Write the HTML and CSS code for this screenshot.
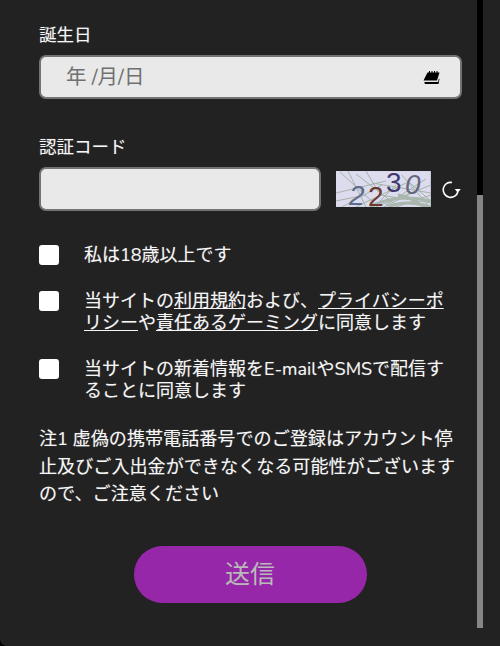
FILE: index.html
```html
<!DOCTYPE html>
<html lang="ja">
<head>
<meta charset="utf-8">
<title>登録</title>
<link rel="stylesheet" href="styles.css">
</head>
<body>
<form class="panel">
  <div class="field dob">
    <label class="label">誕生日</label>
    <div class="box date">
      <span class="date-text">年 /月/日</span>
      <svg class="cal" width="17" height="14" viewBox="0 0 17 14"><path d="M4.500 1.500H6V0h1v1.500h1.500V0h1v1.500H11V0h1v1.500h1.500V0h1v1.500H16.500L14 9.500H.5z" fill="#000"/><path d="M1.500 11h13.500l1-3.500.5.5-1 5H3a1.500 1.500 0 0 1-1.500-2z" fill="#000"/></svg>
    </div>
  </div>
  <div class="field code">
    <label class="label">認証コード</label>
    <div class="code-row">
      <div class="box code-input"></div>
      <svg class="captcha" width="95" height="36" viewBox="0 0 95 36">
        <rect width="95" height="36" fill="#dcdcee"/>
        <g stroke="#a5b3aa" stroke-width="1" fill="none">
          <path d="M4 1 L40 34M12 0 L30 36M20 3 L60 34M30 0 L42 20M0 22 L50 10M6 36 L46 14M20 36 L70 12M40 36 L95 14M50 34 L90 8M60 36 L95 24M66 4 L92 34M74 12 L95 30M36 12 L95 22M44 24 L95 32M0 30 L30 24M38 36 L60 14M48 36 L80 20"/>
          <path d="M34 36 Q60 22 95 30M52 36 Q70 28 95 36M62 24 Q76 26 88 36" stroke="#a9b7ae" stroke-width="3"/>
        </g>
        <text class="cap c1" x="13" y="34.500">2</text>
        <text class="cap c2" x="32" y="35.500">2</text>
        <text class="cap c3" x="50" y="21">3</text>
        <text class="cap c4" x="69" y="23">0</text>
      </svg>
      <svg class="refresh" width="20" height="20" viewBox="0 0 20 20"><path d="M17 11.500A7.500 7.500 0 1 1 11 2.500" fill="none" stroke="#fff" stroke-width="1.600"/><path d="M13.800 9h6l-3 3.800z" fill="#fff"/></svg>
    </div>
  </div>
  <ul class="checks">
    <li class="check one"><input type="checkbox" class="tick"><span>私は18歳以上です</span></li>
    <li class="check two"><input type="checkbox" class="tick"><span>当サイトの<a href="#">利用規約</a>および、<a href="#">プライバシーポリシー</a>や<a href="#">責任あるゲーミング</a>に同意します</span></li>
    <li class="check three"><input type="checkbox" class="tick"><span>当サイトの新着情報をE-mailやSMSで配信することに同意します</span></li>
  </ul>
  <p class="note">注1 虚偽の携帯電話番号でのご登録はアカウント停止及びご入出金ができなくなる可能性がございますので、ご注意ください</p>
  <div class="actions"><button type="button" class="send">送信</button></div>
</form>
<div class="scrollbar"><div class="thumb"></div></div>
</body>
</html>
```
FILE: styles.css
```css
* { box-sizing: border-box; }
html, body { margin: 0; height: 646px; overflow: hidden; background: #000; }
body {
  position: relative;
  font-family: "Nunito", "Lato", "Noto Sans CJK JP", sans-serif;
  color: #f6f6f6;
  text-shadow: 0 0 1px rgba(255, 255, 255, .35);
}
.panel {
  height: 646px;
  background: #222;
  border-bottom-left-radius: 7px;
  padding: 24px 39px 0;
}
.label { display: block; font-size: 17.500px; line-height: 22px; }
.box {
  background: #e9e9e9;
  border: 2px solid #737373;
  border-radius: 7px;
}
.date {
  margin-top: 9px;
  width: 422.500px;
  height: 43.500px;
  display: flex;
  align-items: center;
  justify-content: space-between;
  padding: 0 19.500px 0 25px;
}
.date-text { color: #707070; font-size: 20.500px; text-shadow: none; padding-bottom: 2px; }
.cal { display: block; margin-top: 2px; }
.code { margin-top: 37px; }
.code-row { margin-top: 9px; display: flex; align-items: center; }
.code-input { width: 282px; height: 44px; }
.captcha { display: block; margin-left: 15.500px; }
.refresh { display: block; margin-left: 10px; margin-top: 3px; }
.cap { font-family: "Liberation Sans", sans-serif; font-size: 28px; text-shadow: none; }
.c1 { fill: #5d6b8c; font-style: italic; }
.c2 { fill: #6b3a33; }
.c3 { fill: #41386e; }
.c4 { fill: #66667e; font-style: italic; }
.checks { list-style: none; margin: 34px 0 0; padding: 0; }
.check { display: flex; font-size: 18px; line-height: 21.500px; }
.check span { margin-left: 25.500px; width: 368px; }
.two { margin-top: 25px; }
.three { margin-top: 25px; }
.tick {
  appearance: none;
  margin: 0 0 0 -.5px;
  flex: none;
  width: 20px;
  height: 20px;
  background: #fff;
  border-radius: 3px;
}
.check a { color: inherit; text-decoration: underline; }
.note { margin: 24px 0 0; width: 418px; font-size: 18.100px; line-height: 27.500px; }
.actions { margin-top: 37px; display: flex; justify-content: center; }
.send {
  width: 233px;
  height: 57px;
  border: 0;
  border-radius: 29px;
  background: #9627a8;
  color: #b9b9b9;
  font: inherit;
  font-size: 25px;
  padding: 0 0 3px;
}
.scrollbar {
  position: absolute;
  left: 477px;
  top: 0;
  width: 6px;
  height: 628px;
  background: #000;
}
.thumb {
  position: absolute;
  left: 0;
  top: 195px;
  bottom: 0;
  width: 100%;
  background: #868686;
}
```
